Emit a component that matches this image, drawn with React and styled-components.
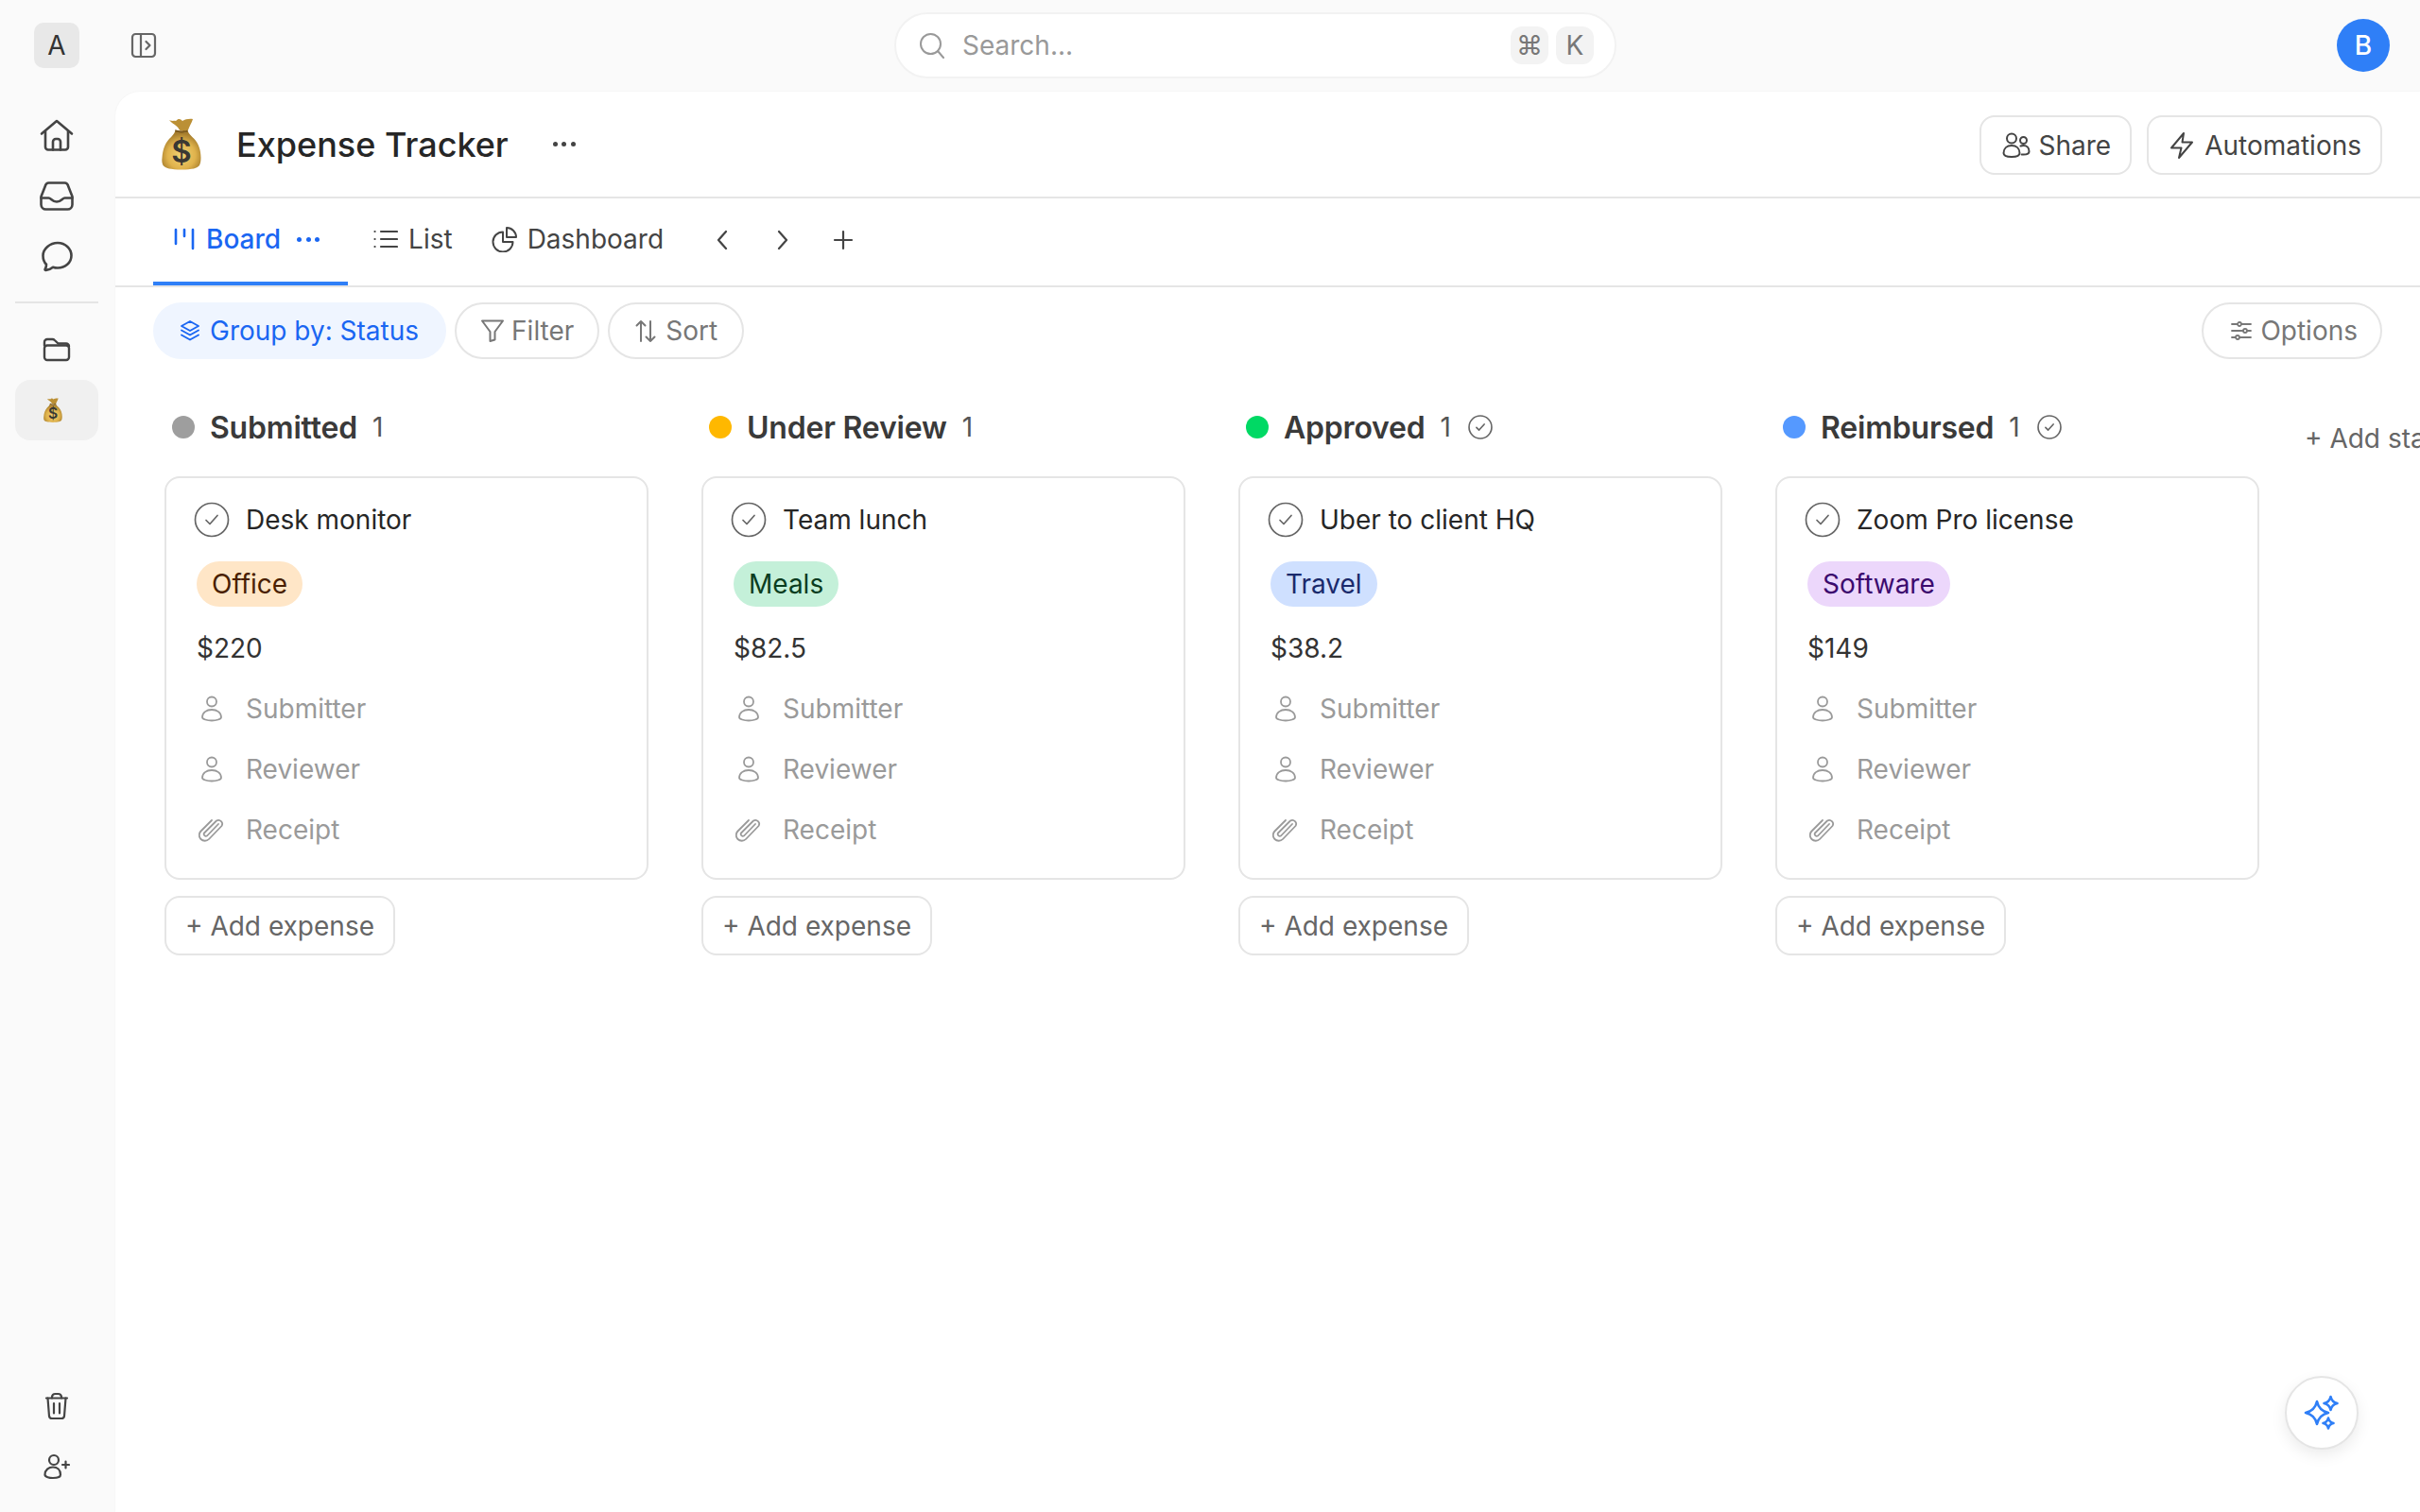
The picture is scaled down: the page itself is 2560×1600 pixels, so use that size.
import styled, { createGlobalStyle } from "styled-components";

const GlobalStyle = createGlobalStyle`
  html, body {
    margin: 0;
    padding: 0;
    background: #fafafa;
    font-family: Inter, "Liberation Sans", sans-serif;
  }
  * { box-sizing: border-box; }
`;

const Page = styled.div`
  width: 100%;
  height: 100vh;
  overflow: hidden;
  display: flex;
  flex-direction: column;
  background: #fafafa;
`;

const TopBar = styled.header`
  height: 97px;
  flex: none;
  padding-bottom: 1px;
  display: grid;
  grid-template-columns: 946px 764px 1fr;
  align-items: center;
`;

const TopLeft = styled.div`
  display: flex;
  align-items: center;
  padding-left: 36px;
  gap: 54px;
`;

const Logo = styled.div`
  width: 48px;
  height: 48px;
  border-radius: 10px;
  background: #e8e8e8;
  color: #333;
  font-size: 28px;
  display: flex;
  align-items: center;
  justify-content: center;
`;

const SearchBox = styled.div`
  height: 70px;
  border: 2px solid #f2f2f2;
  border-radius: 35px;
  background: #fff;
  display: flex;
  align-items: center;
  padding: 0 22px 0 24px;
  color: #999;
  font-size: 28px;
`;

const SearchText = styled.span`
  margin-left: 18px;
  flex: 1;
`;

const Kbd = styled.span`
  width: 40px;
  height: 40px;
  margin-left: 8px;
  border-radius: 12px;
  background: #f3f3f3;
  color: #777;
  font-size: 28px;
  display: flex;
  align-items: center;
  justify-content: center;
`;

const Avatar = styled.div`
  width: 56px;
  height: 56px;
  margin-left: auto;
  margin-right: 32px;
  border-radius: 50%;
  background: #2f7ff7;
  color: #fff;
  font-size: 28px;
  font-weight: 500;
  display: flex;
  align-items: center;
  justify-content: center;
`;

const Body = styled.div`
  flex: 1;
  min-height: 0;
  display: flex;
`;

const Sidebar = styled.aside`
  width: 122px;
  flex: none;
  display: flex;
  flex-direction: column;
  align-items: center;
  padding: 14px 18px 0 16px;
  color: #444;
`;

const NavIcon = styled.div`
  width: ${(p) => (p.$active ? "88px" : "64px")};
  height: 64px;
  flex: none;
  padding-right: ${(p) => (p.$active ? "8px" : "0")};
  border-radius: 16px;
  display: flex;
  align-items: center;
  justify-content: center;
  background: ${(p) => (p.$active ? "#f0f0f0" : "transparent")};
`;

const SideDivider = styled.hr`
  width: 88px;
  height: 2px;
  flex: none;
  margin: 16px 0 17px;
  border: 0;
  background: #e5e5e5;
`;

const SideBottom = styled.div`
  margin-top: auto;
  padding-bottom: 16px;
  display: flex;
  flex-direction: column;
`;

const Main = styled.main`
  position: relative;
  flex: 1;
  min-width: 0;
  background: #fff;
  border-top-left-radius: 26px;
  display: flex;
  flex-direction: column;
  box-shadow: 0 0 2px rgba(0, 0, 0, 0.05);
`;

const TitleBar = styled.div`
  height: 113px;
  flex: none;
  border-bottom: 2px solid #e5e5e5;
  display: flex;
  align-items: center;
  padding: 0 40px 0 49px;
`;

const Title = styled.h1`
  margin: 0 0 0 37px;
  font-size: 36px;
  font-weight: 500;
  color: #262626;
`;

const MoreDots = styled.div`
  margin-left: ${(p) => p.$left || 0}px;
  display: flex;
  gap: 4.5px;
  color: ${(p) => p.$color || "#444"};
  span {
    width: 5px;
    height: 5px;
    border-radius: 50%;
    background: currentColor;
  }
`;

const TitleActions = styled.div`
  margin: 2px 0 0 auto;
  display: flex;
  gap: 16px;
`;

const ActionButton = styled.div`
  height: 63px;
  padding: 0 20px 0 22px;
  border: 2px solid #e5e5e5;
  border-radius: 16px;
  display: flex;
  align-items: center;
  gap: ${(p) => p.$gap}px;
  font-size: 28px;
  color: #444;
`;

const TabBar = styled.nav`
  height: 94px;
  flex: none;
  border-bottom: 2px solid #e5e5e5;
  display: flex;
  align-items: stretch;
  padding-left: 40px;
`;

const Tab = styled.div`
  padding: 0 ${(p) => p.$right}px 2px ${(p) => p.$left}px;
  border-bottom: 4px solid ${(p) => (p.$active ? "#2f7ff7" : "transparent")};
  display: flex;
  align-items: center;
  gap: ${(p) => p.$gap}px;
  font-size: 28px;
  font-weight: ${(p) => (p.$active ? 500 : 400)};
  color: ${(p) => (p.$active ? "#1a66f2" : "#444")};
`;

const TabArrow = styled.div`
  width: 64px;
  padding-bottom: 4px;
  display: flex;
  align-items: center;
  justify-content: center;
  color: #444;
  margin-left: ${(p) => p.$left || 0}px;
`;

const Toolbar = styled.div`
  flex: none;
  display: flex;
  gap: 9px;
  padding: 16px 40px 0 40px;
`;

const Chip = styled.div`
  height: 60px;
  border-radius: 30px;
  border: 2px solid ${(p) => (p.$active ? "#eff5ff" : "#e5e5e5")};
  background: ${(p) => (p.$active ? "#eff5ff" : "#fff")};
  color: ${(p) => (p.$active ? "#1a66f2" : "#777")};
  margin-left: ${(p) => (p.$push ? "auto" : "0")};
  padding: 0 ${(p) => p.$right}px 0 ${(p) => p.$left}px;
  display: flex;
  align-items: center;
  gap: ${(p) => p.$gap}px;
  font-size: 28px;
`;

const Board = styled.div`
  flex: 1;
  min-height: 0;
  overflow: hidden;
  display: flex;
  gap: 56px;
  padding: 45px 0 0 52px;
`;

const Column = styled.section`
  width: 512px;
  flex: none;
  display: flex;
  flex-direction: column;
  align-items: flex-start;
`;

const ColumnHead = styled.div`
  height: 54px;
  padding-left: 8px;
  margin-bottom: 25px;
  display: flex;
  align-items: center;
`;

const StatusDot = styled.span`
  width: 24px;
  height: 24px;
  border-radius: 50%;
  background: ${(p) => p.$color};
`;

const StatusName = styled.span`
  margin-left: 16px;
  font-size: 32px;
  font-weight: 600;
  letter-spacing: -0.2px;
  color: #3a3a3a;
`;

const StatusCount = styled.span`
  margin: 0 18px 0 16px;
  font-size: 28px;
  color: #555;
`;

const Card = styled.article`
  width: 512px;
  height: 427px;
  border: 2px solid #e5e5e5;
  border-radius: 16px;
  padding: 20px 20px 0 29px;
`;

const CardTitle = styled.div`
  height: 48px;
  display: flex;
  align-items: center;
  gap: 17px;
  font-size: 28px;
  color: #262626;
`;

const IconSlot = styled.span`
  width: 38px;
  flex: none;
  display: flex;
  justify-content: center;
`;

const Tag = styled.span`
  display: inline-flex;
  align-items: center;
  height: 48px;
  margin: 20px 0 0 3px;
  padding: 0 16px;
  border-radius: 24px;
  font-size: 28px;
  background: ${(p) => p.$bg};
  color: ${(p) => p.$color};
`;

const Amount = styled.div`
  height: 66px;
  margin-top: 11px;
  margin-bottom: -1px;
  padding-left: 3px;
  display: flex;
  align-items: center;
  font-size: 28px;
  color: #333;
`;

const Field = styled.div`
  height: 64px;
  display: flex;
  align-items: center;
  gap: 17px;
  font-size: 28px;
  color: #9a9a9a;
`;

const AddButton = styled.div`
  height: 63px;
  margin-top: 17px;
  padding: 0 20px;
  border: 2px solid #e5e5e5;
  border-radius: 16px;
  display: flex;
  align-items: center;
  font-size: 28px;
  color: #666;
`;

const AddStatus = styled.div`
  flex: none;
  margin: 19px 0 0 -8px;
  height: 40px;
  font-size: 28px;
  line-height: 40px;
  white-space: nowrap;
  color: #666;
`;

const Fab = styled.div`
  position: absolute;
  right: 65px;
  bottom: 66px;
  width: 78px;
  height: 78px;
  border-radius: 50%;
  border: 2px solid #e5e5e5;
  background: #fff;
  box-shadow: 0 6px 16px rgba(0, 0, 0, 0.08);
  display: flex;
  align-items: center;
  justify-content: center;
`;

// all icons are drawn in the strokes of the reference, size is set per use
const Svg = ({ w, h = w, box, sw = 2, color = "currentColor", children }) => (
  <svg
    width={w}
    height={h}
    viewBox={box || `0 0 ${w} ${h}`}
    fill="none"
    stroke={color}
    strokeWidth={sw}
    strokeLinecap="round"
    strokeLinejoin="round"
  >
    {children}
  </svg>
);

const HomeIcon = () => (
  <Svg w={36} h={34} sw={2.6}>
    <path d="M2 15.5 18 2l16 13.5" />
    <path d="M6 13v16.5a3 3 0 0 0 3 3h18a3 3 0 0 0 3-3V13" />
    <path d="M14 32.5v-8.500a3 3 0 0 1 3-3h2a3 3 0 0 1 3 3v8.500" />
  </Svg>
);

const InboxIcon = () => (
  <Svg w={36} h={31} sw={2.6}>
    <path d="M9.500 1.500h17a3.500 3.500 0 0 1 3.300 2.500L34.500 16v8.500a5 5 0 0 1-5 5h-23a5 5 0 0 1-5-5V16L6.200 4a3.500 3.500 0 0 1 3.300-2.500z" />
    <path d="M1.500 17.500h8c2.500 0 3.500 4 8.500 4s6-4 8.500-4h8" />
  </Svg>
);

const ChatIcon = () => (
  <Svg w={34} h={33} sw={2.6}>
    <path d="M18 2c8 0 14.500 6 14.500 13.500S26 28.500 18 28.500c-1.800 0-3.500-.3-5-.8-2.300 2-5 2.900-7.400 3.200-.9.100-1.300-.7-.9-1.300.9-1.300 1.400-3 1.300-4.800C3.500 22.400 2.500 19 2.500 15.500 2.500 8 10 2 18 2z" />
  </Svg>
);

const FolderIcon = () => (
  <Svg w={30} h={26} sw={2.4}>
    <path d="M2 8.500V5a3 3 0 0 1 3-3h5.500c1 0 1.600.3 2.300 1l3.700 3.500H25a3 3 0 0 1 3 3" />
    <rect x="2" y="8.500" width="26" height="15.500" rx="3" />
  </Svg>
);

const TrashIcon = () => (
  <Svg w={26} h={30} sw={2.2}>
    <path d="M2 6.500h22" />
    <path d="M8 6.500V5a3.500 3.500 0 0 1 3.500-3h3A3.500 3.500 0 0 1 18 5v1.500" />
    <path d="M3.500 6.500 5 25.500a3 3 0 0 0 3 2.500h10a3 3 0 0 0 3-2.500l1.500-19" />
    <path d="M10 12v10.500M16 12v10.500" />
  </Svg>
);

const UserPlusIcon = () => (
  <Svg w={28} h={28} sw={2.2}>
    <circle cx="11" cy="7" r="5" />
    <path d="M1.500 22.500c0-5 4-8 8.500-8s8 3 8 8c0 2.500-4.500 3.500-8 3.500s-8.500-1-8.500-3.500z" />
    <path d="M20 12h7M23.500 8.500v7" />
  </Svg>
);

const PanelIcon = () => (
  <Svg w={28} h={28} sw={2.2} color="#666">
    <rect x="2" y="2" width="24" height="24" rx="3.500" />
    <path d="M11 2v24M16.500 10l4 4-4 4" />
  </Svg>
);

const SearchIcon = () => (
  <Svg w={28} h={28} sw={2} color="#999">
    <circle cx="12.500" cy="12.500" r="10.500" />
    <path d="m20 20 6 7" />
  </Svg>
);

const UsersIcon = () => (
  <Svg w={30} h={28} sw={2}>
    <circle cx="10" cy="6.500" r="5" />
    <circle cx="22.500" cy="8.500" r="3.500" />
    <path d="M1.500 22c0-5 3.500-8 8.500-8s8.500 3 8.500 8c0 2.800-4 4-8.500 4s-8.500-1.200-8.500-4z" />
    <path d="M19.500 14.500c.9-.4 2-.6 3-.6 3.700 0 6 2.700 6 6.300 0 2.600-3.100 3.300-6 3.300-.6 0-1.300 0-1.900-.1" />
  </Svg>
);

const BoltIcon = () => (
  <Svg w={26} h={30} sw={2}>
    <path d="M15 2 2 17.500h10.500L10 28l14-16.500H13.500z" />
  </Svg>
);

const BoardIcon = () => (
  <Svg w={22} h={24} sw={2.6}>
    <path d="M2 2v15M11 2v7M20 2v20" />
  </Svg>
);

const ListIcon = () => (
  <Svg w={26} h={22} sw={2.2}>
    <path d="M8 3h17M8 11h17M8 19h17" />
    <path d="M1.500 3h.1M1.500 11h.1M1.500 19h.1" />
  </Svg>
);

const PieIcon = () => (
  <Svg w={28} h={28} sw={2}>
    <path d="M12 6.500A10.500 10.500 0 1 0 22.500 17H12z" />
    <path d="M16 2a10 10 0 0 1 10 10H16z" />
  </Svg>
);

const ChevronIcon = ({ dir }) => (
  <Svg w={14} h={24} sw={2.2}>
    <path d={dir === "left" ? "M11 3 3 12l8 9" : "m3 3 8 9-8 9"} />
  </Svg>
);

const PlusIcon = () => (
  <Svg w={24} h={24} sw={2.2}>
    <path d="M12 3v18M3 12h18" />
  </Svg>
);

const StackIcon = () => (
  <Svg w={22} h={24} sw={1.9}>
    <path d="m11 2 9 5-9 5-9-5z" />
    <path d="m2 11.500 9 5 9-5" />
    <path d="m2 16.500 9 5 9-5" />
  </Svg>
);

const FunnelIcon = () => (
  <Svg w={26} h={26} sw={2}>
    <path d="M2 2.500h22L15.500 14v8.500L10.500 24v-10z" />
  </Svg>
);

const SortIcon = () => (
  <Svg w={24} h={26} sw={2}>
    <path d="M7 24V3M2.500 7.500 7 3l4.500 4.500" />
    <path d="M17 3v21M12.500 19.500 17 24l4.500-4.500" />
  </Svg>
);

const SlidersIcon = () => (
  <Svg w={24} h={22} sw={1.8}>
    <path d="M2 4h6M12 4h10M2 11h12M18 11h4M2 18h4M10 18h12" />
    <circle cx="10" cy="4" r="2" />
    <circle cx="16" cy="11" r="2" />
    <circle cx="8" cy="18" r="2" />
  </Svg>
);

const CheckCircle = ({ size = 38, sw = 1.7 }) => (
  <Svg w={size} box="0 0 38 38" sw={sw} color="#666">
    <circle cx="19" cy="19" r="17.500" />
    <path d="m13 19.500 4 4 8-9" />
  </Svg>
);

const PersonIcon = () => (
  <Svg w={24} h={28} sw={1.8} color="#9a9a9a">
    <circle cx="12" cy="6.500" r="5" />
    <path d="M2 23c0-5 4.500-8 10-8s10 3 10 8c0 2-5 3.500-10 3.500S2 25 2 23z" />
  </Svg>
);

const ClipIcon = () => (
  <Svg w={28} h={28} sw={1.8} color="#9a9a9a">
    <path d="M21 8 9 20.500a2.200 2.200 0 0 1-3-3L19 4.500a4 4 0 0 1 5.500 5.500L11 24a6 6 0 0 1-8.500-8.500L14 4" />
  </Svg>
);

const star = (cx, cy, r) =>
  `M${cx} ${cy - r}Q${cx + r * 0.18} ${cy - r * 0.18} ${cx + r} ${cy}Q${cx + r * 0.18} ${cy + r * 0.18} ${cx} ${cy + r}Q${cx - r * 0.18} ${cy + r * 0.18} ${cx - r} ${cy}Q${cx - r * 0.18} ${cy - r * 0.18} ${cx} ${cy - r}z`;

const SparkIcon = () => (
  <Svg w={38} sw={2.6} color="#2f7ff7">
    <path d={star(14, 19, 12)} />
    <path d={star(28.500, 9, 7)} />
    <path d={star(26, 30, 5.500)} />
  </Svg>
);

const MoneyBag = ({ width }) => (
  <svg width={width} viewBox="0 0 42 55" style={{ display: "block" }}>
    <defs>
      <radialGradient id="bag" cx="50%" cy="62%" r="58%">
        <stop offset="0%" stopColor="#f2d374" />
        <stop offset="62%" stopColor="#dfb24c" />
        <stop offset="100%" stopColor="#a67d2c" />
      </radialGradient>
    </defs>
    <path
      d="M8 2c3 1.500 5 .5 7 1 2.500-3 5-2.500 7 0 3-1.500 6-2.500 11-2-1 3.500-3.500 7.500-5 11.500-.5 2-8.500 2-9.500-.5C17 8 10.500 5.500 8 2z"
      fill="#bb9035"
    />
    <path d="M14.500 12c3 1.800 10 1.800 13 .5l.6 2.500c-3.600 1.500-10.600 1.500-14.200 0z" fill="#7d5a1c" />
    <path
      d="M14 14.500c4 1.500 10 1.500 14 0 1 2.500 3.500 4.500 6.500 7.500 4.500 5 7 11.500 7 20 0 3-.5 6-1.500 8-2.500 3-7.500 4.500-19 4.500S4 53 1.500 50C.5 48 0 45 .5 42c.5-8.500 3-15 7.500-20 3-3 5-5 6-7.500z"
      fill="url(#bag)"
    />
    <text
      x="21"
      y="47"
      textAnchor="middle"
      fontFamily="Inter, sans-serif"
      fontWeight="600"
      fontSize="33"
      fill="#3a3833"
    >
      $
    </text>
  </svg>
);

const columns = [
  { status: "Submitted", dot: "#9e9e9e", title: "Desk monitor", tag: "Office", bg: "#ffe6c7", fg: "#4a1f00", amount: "$220" },
  { status: "Under Review", dot: "#ffb800", title: "Team lunch", tag: "Meals", bg: "#c4f0d9", fg: "#0a3d1f", amount: "$82.5" },
  { status: "Approved", dot: "#00d964", title: "Uber to client HQ", tag: "Travel", bg: "#cfe0ff", fg: "#1a2a6c", amount: "$38.2", done: true },
  { status: "Reimbursed", dot: "#5599ff", title: "Zoom Pro license", tag: "Software", bg: "#ecd7fb", fg: "#3b0a6e", amount: "$149", done: true },
];

const Dots = (props) => (
  <MoreDots {...props}>
    <span />
    <span />
    <span />
  </MoreDots>
);

const App = () => {
  return (
    <Page>
      <GlobalStyle />
      <TopBar>
        <TopLeft>
          <Logo>A</Logo>
          <PanelIcon />
        </TopLeft>
        <SearchBox>
          <SearchIcon />
          <SearchText>Search...</SearchText>
          <Kbd>⌘</Kbd>
          <Kbd>K</Kbd>
        </SearchBox>
        <Avatar>B</Avatar>
      </TopBar>
      <Body>
        <Sidebar>
          <NavIcon><HomeIcon /></NavIcon>
          <NavIcon><InboxIcon /></NavIcon>
          <NavIcon><ChatIcon /></NavIcon>
          <SideDivider />
          <NavIcon><FolderIcon /></NavIcon>
          <NavIcon $active><MoneyBag width={20} /></NavIcon>
          <SideBottom>
            <NavIcon><TrashIcon /></NavIcon>
            <NavIcon><UserPlusIcon /></NavIcon>
          </SideBottom>
        </Sidebar>
        <Main>
          <TitleBar>
            <MoneyBag width={42} />
            <Title>Expense Tracker</Title>
            <Dots $left={47} $color="#444" />
            <TitleActions>
              <ActionButton $gap={8}><UsersIcon /> Share</ActionButton>
              <ActionButton $gap={11}><BoltIcon /> Automations</ActionButton>
            </TitleActions>
          </TitleBar>
          <TabBar>
            <Tab $active $left={22} $right={30} $gap={12}>
              <BoardIcon /> Board <Dots $left={5} $color="#1a66f2" />
            </Tab>
            <Tab $left={27} $right={19} $gap={11}>
              <ListIcon /> List
            </Tab>
            <Tab $left={22} $right={0} $gap={10}>
              <PieIcon /> Dashboard
            </Tab>
            <TabArrow $left={30}><ChevronIcon dir="left" /></TabArrow>
            <TabArrow><ChevronIcon dir="right" /></TabArrow>
            <TabArrow><PlusIcon /></TabArrow>
          </TabBar>
          <Toolbar>
            <Chip $active $left={26} $right={27} $gap={10}><StackIcon /> Group by: Status</Chip>
            <Chip $left={25} $right={25} $gap={7}><FunnelIcon /> Filter</Chip>
            <Chip $left={26} $right={26} $gap={9}><SortIcon /> Sort</Chip>
            <Chip $push $left={28} $right={24} $gap={8}><SlidersIcon /> Options</Chip>
          </Toolbar>
          <Board>
            {columns.map((c) => (
              <Column key={c.status}>
                <ColumnHead>
                  <StatusDot $color={c.dot} />
                  <StatusName>{c.status}</StatusName>
                  <StatusCount>1</StatusCount>
                  {c.done && <CheckCircle size={26} sw={2.4} />}
                </ColumnHead>
                <Card>
                  <CardTitle>
                    <IconSlot><CheckCircle /></IconSlot>
                    {c.title}
                  </CardTitle>
                  <Tag $bg={c.bg} $color={c.fg}>{c.tag}</Tag>
                  <Amount>{c.amount}</Amount>
                  <Field><IconSlot><PersonIcon /></IconSlot>Submitter</Field>
                  <Field><IconSlot><PersonIcon /></IconSlot>Reviewer</Field>
                  <Field><IconSlot><ClipIcon /></IconSlot>Receipt</Field>
                </Card>
                <AddButton>+ Add expense</AddButton>
              </Column>
            ))}
            <AddStatus>+ Add status</AddStatus>
          </Board>
          <Fab><SparkIcon /></Fab>
        </Main>
      </Body>
    </Page>
  );
};

export default App;
